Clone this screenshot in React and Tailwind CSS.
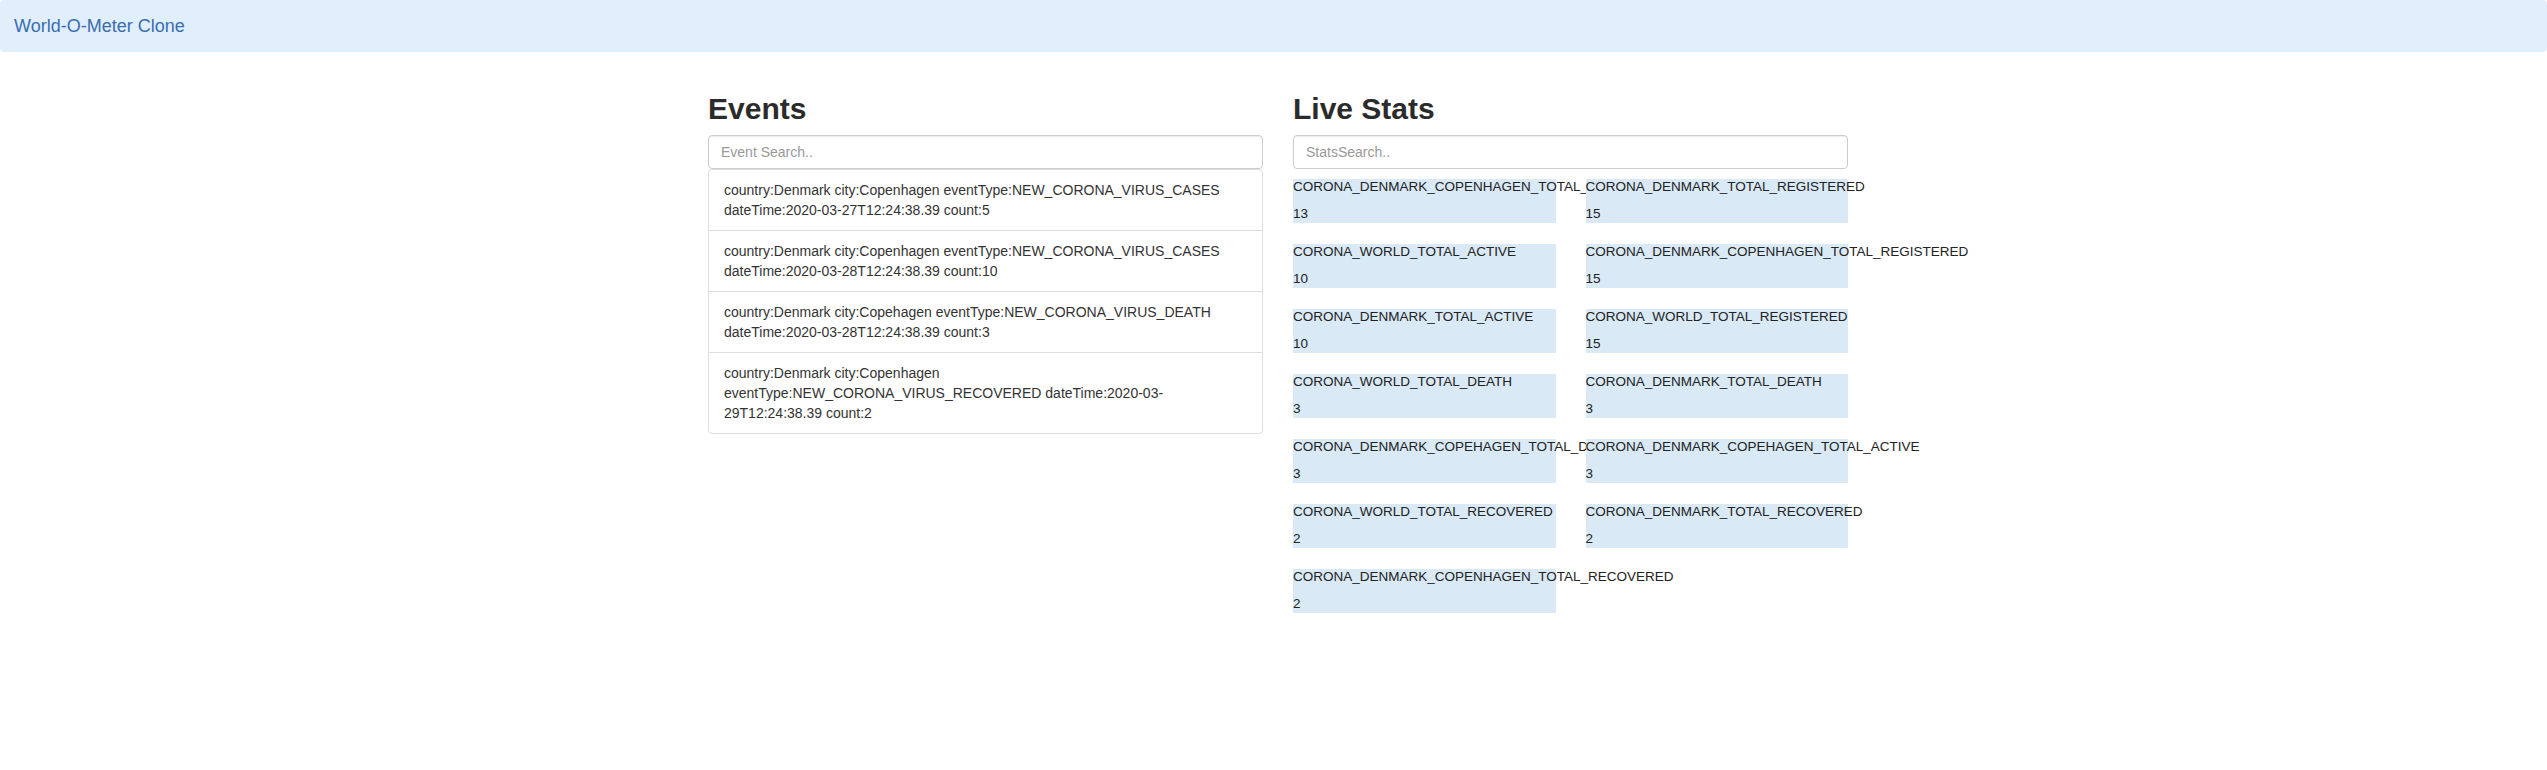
const events = [
  "country:Denmark city:Copenhagen eventType:NEW_CORONA_VIRUS_CASES dateTime:2020-03-27T12:24:38.39 count:5",
  "country:Denmark city:Copenhagen eventType:NEW_CORONA_VIRUS_CASES dateTime:2020-03-28T12:24:38.39 count:10",
  "country:Denmark city:Copehagen eventType:NEW_CORONA_VIRUS_DEATH dateTime:2020-03-28T12:24:38.39 count:3",
  "country:Denmark city:Copenhagen eventType:NEW_CORONA_VIRUS_RECOVERED dateTime:2020-03-29T12:24:38.39 count:2",
]

const stats = [
  ["CORONA_DENMARK_COPENHAGEN_TOTAL_ACTIVE", 13],
  ["CORONA_DENMARK_TOTAL_REGISTERED", 15],
  ["CORONA_WORLD_TOTAL_ACTIVE", 10],
  ["CORONA_DENMARK_COPENHAGEN_TOTAL_REGISTERED", 15],
  ["CORONA_DENMARK_TOTAL_ACTIVE", 10],
  ["CORONA_WORLD_TOTAL_REGISTERED", 15],
  ["CORONA_WORLD_TOTAL_DEATH", 3],
  ["CORONA_DENMARK_TOTAL_DEATH", 3],
  ["CORONA_DENMARK_COPEHAGEN_TOTAL_DEATH", 3],
  ["CORONA_DENMARK_COPEHAGEN_TOTAL_ACTIVE", 3],
  ["CORONA_WORLD_TOTAL_RECOVERED", 2],
  ["CORONA_DENMARK_TOTAL_RECOVERED", 2],
  ["CORONA_DENMARK_COPENHAGEN_TOTAL_RECOVERED", 2],
]

const inputClass =
  "block h-[34px] w-full rounded border border-[#ccc] bg-white px-3 py-1.5 text-[14px] leading-5 text-[#555] shadow-[inset_0_1px_1px_rgba(0,0,0,0.075)] outline-none placeholder:text-[#999]"

export default function App() {
  return (
    <div className="min-h-screen bg-white font-['Liberation_Sans',Arial,sans-serif] text-[14px] leading-5 text-[#333]">
      <nav className="mb-5 flex h-[52px] items-center rounded border border-[#e1eefb] bg-[#e1eefb] px-[13px]">
        <a className="text-[18px] leading-5 text-[#3a6db0]">World-O-Meter Clone</a>
      </nav>

      <div className="pl-[9px]">
        <div className="mx-auto grid w-[1170px] grid-cols-2">
          <section className="px-[15px]">
            <h2 className="mt-5 mb-2.5 text-[30px] leading-[33px] font-bold text-[#2b2b2b]">Events</h2>
            <input placeholder="Event Search.." className={inputClass} />
            <ul>
              {events.map((e, i) => (
                <li
                  key={i}
                  className="relative -mb-px border border-[#ddd] bg-white px-[15px] py-2.5 first:rounded-t last:rounded-b"
                >
                  {e}
                </li>
              ))}
            </ul>
          </section>

          <section className="px-[15px]">
            <h2 className="mt-5 mb-2.5 text-[30px] leading-[33px] font-bold text-[#2b2b2b]">Live Stats</h2>
            <input placeholder="StatsSearch.." className={inputClass + " mb-2.5"} />
            {/* later boxes are positioned, so their background covers a long label to their left */}
            <div className="grid grid-cols-2 gap-x-[30px] gap-y-[21px]">
              {stats.map(([name, value]) => (
                <div key={name} className="relative h-[44px] whitespace-nowrap bg-[#d9e9f6] text-[13.5px] text-[#222]">
                  <div className="leading-4">{name}</div>
                  <div className="mt-[11px] leading-4">{value}</div>
                </div>
              ))}
            </div>
          </section>
        </div>
      </div>
    </div>
  )
}
